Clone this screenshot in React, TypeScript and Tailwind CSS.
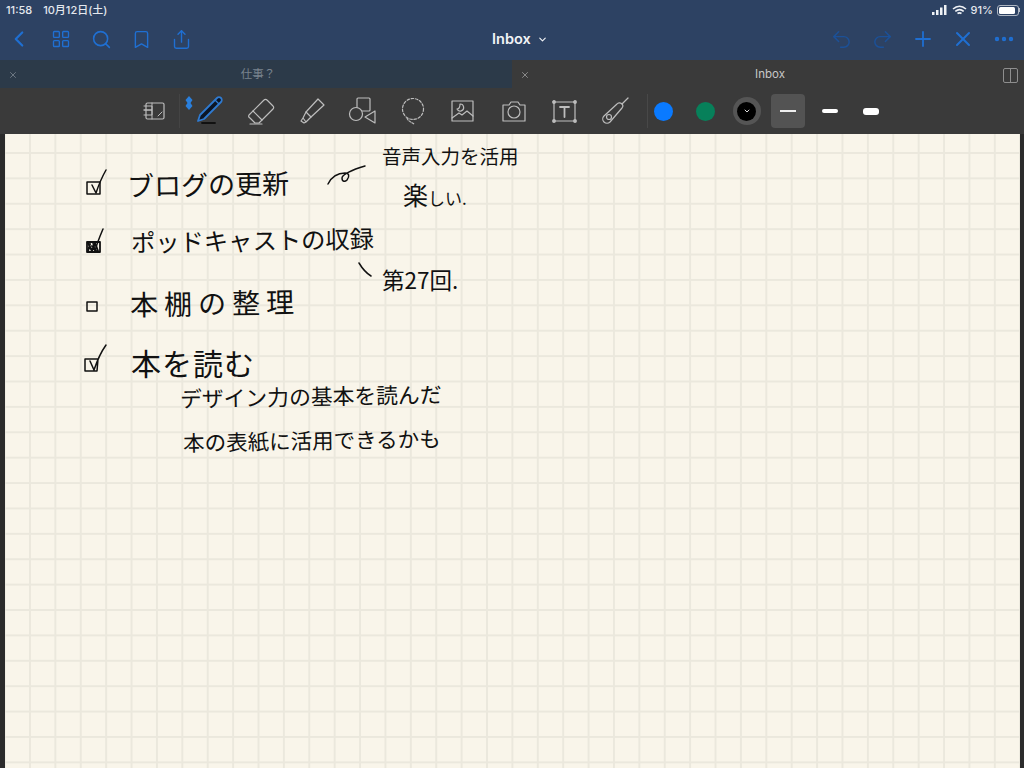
import { Bookmark, ChevronDown, ChevronLeft, Ellipsis, LayoutGrid, Plus, Redo2, Search, Share, Undo2, X } from "lucide-react";
import type { ReactNode } from "react";

const ui = "font-['Inter','Noto_Sans_CJK_JP',sans-serif]";
const hand = "absolute whitespace-nowrap leading-none text-[#111] font-['Noto_Sans_CJK_JP',sans-serif] font-normal";

function Slot({ children, className = "w-[50.5px]" }: { children: ReactNode; className?: string }) {
  return <div className={`flex h-full shrink-0 items-center justify-center ${className}`}>{children}</div>;
}

function ToolIcon({ children }: { children: ReactNode }) {
  return (
    <svg width="32" height="32" viewBox="0 0 32 32" fill="none" stroke="#bdbdbd" strokeWidth="1.2" strokeLinecap="round" strokeLinejoin="round">
      {children}
    </svg>
  );
}

function Toolbar() {
  return (
    <div className="relative flex h-[46px] items-center bg-[#3a3a3a] pl-[129px]">
      <Slot>
        <ToolIcon>
          <rect x="8" y="8" width="18" height="16" rx="1.5" />
          <path d="M14 8v16M20 21l4-4" strokeWidth="1" />
          <path d="M6 11h8v4H6M6 15h8v5H6" strokeWidth="1" />
        </ToolIcon>
      </Slot>
      <div className="-mx-[1px] h-[34px] w-px bg-[#444]" />
      <Slot className="ml-[7px] w-[50.5px]">
        <svg width="36" height="36" viewBox="0 0 36 36" fill="none" className="mt-[-2px]">
          <path d="M5 29l2-6L24 6c1-1 3-1 4 0s1 3 0 4L11 27z" fill="#0c1626" stroke="#2f7ad0" strokeWidth="1.8" strokeLinejoin="round" />
          <path d="M22 8l4 4" stroke="#2f7ad0" strokeWidth="1.2" />
          <path d="M9 31h13" stroke="#111" strokeWidth="1.8" strokeLinecap="round" />
        </svg>
      </Slot>
      <Slot>
        <ToolIcon>
          <path d="M4 20L19 5a2 2 0 0 1 3 0l6 6a2 2 0 0 1 0 3L14 28H10l-5-5a2 2 0 0 1-1-3z" />
          <path d="M8 16l9 9M5 29h12" />
        </ToolIcon>
      </Slot>
      <Slot>
        <ToolIcon>
          <path d="M10 17L22 4l6 6-13 12-5-5z" />
          <path d="M10 17l-2 4-1 2 3 4 2-2 3-3M7 23l-2 3 3 2 2-1" />
        </ToolIcon>
      </Slot>
      <Slot>
        <ToolIcon>
          <rect x="11" y="3" width="13" height="13" rx="1" />
          <circle cx="10" cy="19" r="6.500" fill="#3a3a3a" />
          <path d="M29 16v12l-10-6z" fill="#3a3a3a" />
        </ToolIcon>
      </Slot>
      <Slot>
        <ToolIcon>
          <circle cx="16" cy="14" r="10.500" strokeDasharray="2.500 1.800" />
          <path d="M10 23c1 3 4 4 7 6" strokeDasharray="2 1.500" />
        </ToolIcon>
      </Slot>
      <Slot>
        <ToolIcon>
          <rect x="5" y="6" width="21" height="20" />
          <path d="M5 23l7-5 3 2 5-4 6 5" />
          <path d="M13 9a3.500 3.500 0 1 1-3 5c2 0 3-2 3-5z" />
        </ToolIcon>
      </Slot>
      <Slot>
        <ToolIcon>
          <path d="M5 10h6l2-3h7l2 3h5v16H5z" />
          <circle cx="16" cy="17" r="6" />
        </ToolIcon>
      </Slot>
      <Slot>
        <ToolIcon>
          <rect x="6" y="7" width="21" height="19" />
          <path d="M12 12h9M16.500 12v10" strokeWidth="1.800" />
          <circle cx="6" cy="7" r="1.300" fill="#bdbdbd" />
          <circle cx="27" cy="7" r="1.300" fill="#bdbdbd" />
          <circle cx="6" cy="26" r="1.300" fill="#bdbdbd" />
          <circle cx="27" cy="26" r="1.300" fill="#bdbdbd" />
        </ToolIcon>
      </Slot>
      <Slot>
        <ToolIcon>
          <path d="M5 21L18 9a3 3 0 0 1 5 4L11 27a4 4 0 0 1-6-6z" />
          <circle cx="10" cy="22" r="2.500" />
          <path d="M23 9l6-6" />
        </ToolIcon>
      </Slot>
      <div className="ml-[7px] h-[34px] w-px bg-[#484848]" />
      <Slot className="ml-[-5px] w-[41.500px]">
        <div className="h-[19px] w-[19px] rounded-full bg-[#0a7aff]" />
      </Slot>
      <Slot className="w-[41.500px]">
        <div className="h-[19px] w-[19px] rounded-full bg-[#07805a]" />
      </Slot>
      <Slot className="w-[41.500px]">
        <div className="flex h-[28px] w-[28px] items-center justify-center rounded-full bg-[#555]">
          <div className="flex h-[19px] w-[19px] items-center justify-center rounded-full bg-black">
            <ChevronDown size={8} strokeWidth={3} color="#ddd" />
          </div>
        </div>
      </Slot>
      <Slot className="w-[41.500px]">
        <div className="flex h-[34px] w-[34px] items-center justify-center rounded-[4px] bg-[#535353]">
          <div className="h-[2px] w-[16px] bg-[#eee]" />
        </div>
      </Slot>
      <Slot className="w-[41.500px]">
        <div className="h-[4px] w-[16px] rounded-[2px] bg-white" />
      </Slot>
      <Slot className="w-[41.500px]">
        <div className="h-[7px] w-[16px] rounded-[3px] bg-white" />
      </Slot>
      <svg width="10" height="14" viewBox="0 0 10 14" className="absolute left-[184px] top-[8px]" fill="#2a7fdc">
        <path d="M5 0L8.500 4 6.500 7 8.500 10 5 14 1.500 10 3.500 7 1.500 4z" />
      </svg>
    </div>
  );
}

function Strokes() {
  return (
    <svg viewBox="5 134 1015 634" className="absolute inset-0 h-[634px] w-[1015px]" fill="none" stroke="#111" strokeWidth="1.500" strokeLinecap="round" strokeLinejoin="round">
      <path d="M87 182h13v12H87z" />
      <path d="M92 185l4 8c3-9 6-16 10-23" />
      <path d="M87 242h13v10H87z" strokeWidth="1.800" />
      <path d="M88 243l4 8 3-8 3 8M90 244l-2 7M92 246l4 5" strokeWidth="2" />
      <path d="M93 243l2 8c2-8 5-15 8-22" />
      <path d="M87 302h10v9H87zM87 302v9" />
      <path d="M85 359h13M85 359v12h12l1-12M90 361l4 9c3-9 7-18 12-25" />
      <path d="M328 184c3-6 9-11 17-11 4 0 5 3 2 7-2 2-5 2-5-2 0-3 9-8 23-12" />
      <path d="M359 263c3 5 7 10 12 13" />
    </svg>
  );
}

export default function App() {
  return (
    <div className={`flex h-[768px] w-[1024px] flex-col overflow-hidden bg-[#2b2b2b] ${ui}`}>
      <div className="bg-[#2d4263]">
        <div className="flex h-[20px] items-center justify-between pl-[6px] pr-[4px] text-[11px] font-medium text-[#e4e8ee]">
          <div className="flex gap-[11px]">
            <span>11:58</span>
            <span>10月12日(土)</span>
          </div>
          <div className="flex items-center gap-[3px]">
            <svg width="15" height="10" viewBox="0 0 15 10" fill="#eef1f5">
              <rect x="0" y="7" width="2.500" height="3" />
              <rect x="4" y="5" width="2.500" height="5" />
              <rect x="8" y="2.500" width="2.500" height="7.500" />
              <rect x="12" y="0" width="2.500" height="10" />
            </svg>
            <svg width="15" height="11" viewBox="0 0 15 11" fill="none" stroke="#eef1f5" strokeWidth="1.600" className="ml-[2px]">
              <path d="M1 4c4-3.500 9-3.500 13 0M3.300 6.300c2.500-2 6-2 8.400 0M5.500 8.500c1.200-.8 2.800-.8 4 0" />
            </svg>
            <span className="ml-[1px]">91%</span>
            <div className="ml-[1px] flex items-center">
              <div className="h-[11px] w-[22px] rounded-[3px] border border-[#aeb6c2] p-[1px]">
                <div className="h-full w-[90%] rounded-[1.500px] bg-white" />
              </div>
              <div className="h-[4px] w-[1px] bg-[#aeb6c2]" />
            </div>
          </div>
        </div>
        <div className="relative flex h-[40px] items-center justify-between pb-[2px] text-[#1f6fd2]">
          <div className="flex items-center">
            <Slot className="w-[38px]"><ChevronLeft size={26} strokeWidth={2} /></Slot>
            <Slot className="w-[46px]"><LayoutGrid size={20} strokeWidth={1.600} /></Slot>
            <Slot className="w-[34px]"><Search size={21} strokeWidth={1.800} /></Slot>
            <Slot className="w-[46px]"><Bookmark size={21} strokeWidth={1.600} /></Slot>
            <Slot className="w-[35px]"><Share size={21} strokeWidth={1.600} /></Slot>
          </div>
          <div className="absolute left-[492px] top-[10px] flex items-center gap-[6px] text-[14.500px] font-semibold leading-[18px] text-[#f1f3f6]">
            Inbox
            <ChevronDown size={11} strokeWidth={2.500} />
          </div>
          <div className="flex items-center">
            <Slot className="w-[41px]"><Undo2 size={23} strokeWidth={1.500} color="#1c5198" /></Slot>
            <Slot className="w-[40px]"><Redo2 size={23} strokeWidth={1.500} color="#1c5198" /></Slot>
            <Slot className="w-[41px]"><Plus size={24} strokeWidth={1.800} /></Slot>
            <Slot className="w-[40px]"><X size={24} strokeWidth={2} /></Slot>
            <Slot className="w-[41px]"><Ellipsis size={24} strokeWidth={2.400} /></Slot>
          </div>
        </div>
      </div>
      <div className="flex h-[28px] text-[11.500px]">
        <div className="relative flex w-[512px] items-center justify-center bg-[#2c3a49] pl-[4px] pt-[2px] text-[#79838e]">
          <X size={10} strokeWidth={2} className="absolute left-[8px]" />
          仕事？
        </div>
        <div className="relative flex w-[512px] items-center justify-center bg-[#3a3a3a] pl-[4px] pt-[2px] text-[#c8c8c8]">
          <X size={10} strokeWidth={2} className="absolute left-[8px] text-[#9a9a9a]" />
          Inbox
          <div className="absolute right-[6px] flex h-[15px] w-[15px] rounded-[2px] border border-[#8e8e8e]">
            <div className="h-full w-1/2 border-r border-[#8e8e8e]" />
          </div>
        </div>
      </div>
      <Toolbar />
      <div className="flex-1 pl-[5px] pr-[4px]">
        <div className="relative h-[634px] w-[1015px] bg-[#f9f5ea] bg-[linear-gradient(to_right,#ebe8dd_2px,transparent_2px),linear-gradient(to_bottom,#ebe8dd_2px,transparent_2px)] bg-[length:25.400px_25.400px] bg-position-[24px_18px]">
          <Strokes />
          <span className={`${hand} left-[122px] top-[36px] text-[27px] -rotate-1`}>ブログの更新</span>
          <span className={`${hand} left-[126px] top-[94px] text-[24.300px] -rotate-1`}>ポッドキャストの収録</span>
          <span className={`${hand} left-[125px] top-[154px] text-[28px] tracking-[6px] -rotate-1`}>本棚の整理</span>
          <span className={`${hand} left-[126px] top-[213px] text-[30px] tracking-[1px]`}>本を読む</span>
          <span className={`${hand} left-[377px] top-[12px] text-[19.500px]`}>音声入力を活用</span>
          <span className={`${hand} left-[398px] top-[48px] text-[25px]`}>楽<span className="text-[17px]">しい.</span></span>
          <span className={`${hand} left-[377px] top-[134px] text-[22.500px]`}>第27回.</span>
          <span className={`${hand} left-[175px] top-[251px] text-[21.800px] -rotate-1`}>デザイン力の基本を読んだ</span>
          <span className={`${hand} left-[178px] top-[295px] text-[21.500px] -rotate-1`}>本の表紙に活用できるかも</span>
        </div>
      </div>
    </div>
  );
}
